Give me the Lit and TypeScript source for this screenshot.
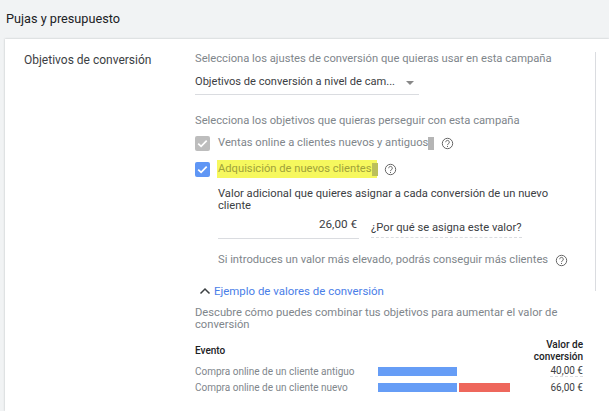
import { LitElement, html, css, svg } from "lit";
import { customElement } from "lit/decorators.js";

const help = svg`<svg class="help" width="13" height="13" viewBox="0 0 13 13" fill="none"><circle cx="6.5" cy="6.5" r="5.2" stroke="#666" stroke-width="1"/><path d="M4.7 5.200a1.800 1.800 0 1 1 2.800 1.500c-.6.4-1 .7-1 1.400" stroke="#666" stroke-width="1"/><rect x="6" y="9" width="1" height="1" fill="#666"/></svg>`;
const check = svg`<svg width="15" height="15" viewBox="0 0 15 15" fill="none"><path d="M3.200 7.600l2.900 2.800 5.600-5.800" stroke="#fff" stroke-width="1.700"/></svg>`;

@customElement("app-root")
export class AppRoot extends LitElement {
  static styles = css`
    :host { display: block; width: 609px; height: 411px; overflow: hidden; background: #f1f3f4; font-family: Roboto, sans-serif; font-size: 11.2px; color: #80868b; }
    .title { height: 39px; box-sizing: border-box; padding: 11px 0 0 6px; font-size: 12.7px; line-height: 16px; color: #202124; }
    .card { margin-left: 5px; height: 372px; box-sizing: border-box; background: #fff; padding: 13px 0 0 19px; display: flex; box-shadow: 0 0 2px rgba(60,64,67,.3); }
    .label { width: 171px; flex: none; font-size: 12px; line-height: 16px; color: #3c4043; }
    .main { flex: 1; min-width: 0; }
    .upper { width: 401px; height: 239px; box-sizing: border-box; border-right: 1px solid #dadce0; }
    .line { line-height: 14px; white-space: nowrap; }
    .select { width: 224px; height: 22px; margin-top: 7px; box-sizing: border-box; border-bottom: 1px solid #dadce0; display: flex; align-items: flex-start; color: #3c4043; padding-top: 2px; line-height: 14px; white-space: nowrap; font-size: 11.1px; }
    .arrow { width: 0; height: 0; margin: 6px 0 0 11px; border-left: 4px solid transparent; border-right: 4px solid transparent; border-top: 4px solid #888; }
    .goals { margin-top: 19px; }
    .chk { display: flex; align-items: center; height: 16px; }
    .box { width: 15px; height: 15px; border-radius: 2px; flex: none; margin-right: 8px; }
    .box.off { background: #bdbdbd; }
    .box.on { background: #5f96f5; }
    .first { margin-top: 7px; }
    .second { margin-top: 10px; }
    .mark { width: 6px; height: 13px; background: #b5b5b5; flex: none; }
    .hl { background: #f6f85e; color: #a0a23a; padding: 2px 0 2px 1px; margin-left: -1px; display: flex; align-items: center; line-height: 14px; }
    .hl .mark { background: #bcc05a; margin-right: -1px; }
    .help { flex: none; margin-left: 7px; }
    .detail { margin: 11px 0 0 23px; }
    .dark { color: #3c4043; line-height: 12px; width: 340px; }
    .val { display: flex; align-items: flex-start; height: 28px; }
    .input { width: 141px; height: 27px; box-sizing: border-box; border-bottom: 1px solid #dadce0; color: #3c4043; text-align: right; line-height: 14px; padding: 5px 2px 0 0; font-size: 11.7px; }
    .why { margin-left: 12px; margin-top: 9px; color: #3c4043; line-height: 14px; height: 17px; box-sizing: border-box; border-bottom: 1px dashed #dadce0; }
    .hint { display: flex; align-items: center; margin-top: 13px; line-height: 14px; }
    .toggle { display: flex; align-items: center; margin: -7px 0 0 4px; color: #4a7ee8; line-height: 14px; font-size: 11.45px; }
    .toggle svg { margin-right: 3px; }
    .desc { margin-top: 9px; line-height: 12px; width: 380px; }
    .table { width: 388px; margin-top: 8px; }
    .head { display: flex; justify-content: space-between; align-items: center; color: #202124; font-weight: 500; font-size: 10px; line-height: 12px; }
    .head .r { text-align: right; }
    .row { display: flex; align-items: center; height: 16px; font-size: 10px; color: #80868b; }
    .name { width: 183px; flex: none; white-space: nowrap; }
    .bars { display: flex; gap: 2px; flex: 1; }
    .bar { height: 9px; }
    .blue { width: 79px; background: #669df6; }
    .red { width: 51px; background: #ee675c; }
    .num { color: #3c4043; text-align: right; }
    .first-num { border-bottom: 1px dashed #dadce0; }
  `;

  render() {
    return html`
      <div class="title">Pujas y presupuesto</div>
      <div class="card">
        <div class="label">Objetivos de conversión</div>
        <div class="main">
          <div class="upper">
            <div class="line">Selecciona los ajustes de conversión que quieras usar en esta campaña</div>
            <div class="select"><span>Objetivos de conversión a nivel de cam...</span><span class="arrow"></span></div>
            <div class="goals line">Selecciona los objetivos que quieras perseguir con esta campaña</div>
            <div class="chk first">
              <span class="box off">${check}</span>
              <span class="line">Ventas online a clientes nuevos y antiguos</span><span class="mark"></span>${help}
            </div>
            <div class="chk second">
              <span class="box on">${check}</span>
              <span class="hl"><span class="line">Adquisición de nuevos clientes</span><span class="mark"></span></span>${help}
            </div>
            <div class="detail">
              <div class="dark">Valor adicional que quieres asignar a cada conversión de un nuevo cliente</div>
              <div class="val">
                <div class="input">26,00 €</div>
                <div class="why">¿Por qué se asigna este valor?</div>
              </div>
              <div class="hint">Si introduces un valor más elevado, podrás conseguir más clientes ${help}</div>
            </div>
          </div>
          <div class="toggle">
            <svg width="12" height="8" viewBox="0 0 12 8" fill="none"><path d="M1.500 6.500L6 2l4.500 4.500" stroke="#3c4043" stroke-width="1.500"/></svg>
            Ejemplo de valores de conversión
          </div>
          <div class="desc">Descubre cómo puedes combinar tus objetivos para aumentar el valor de conversión</div>
          <div class="table">
            <div class="head"><span>Evento</span><span class="r">Valor de<br />conversión</span></div>
            <div>
              <div class="row"><span class="name">Compra online de un cliente antiguo</span><span class="bars"><span class="bar blue"></span></span><span class="num first-num">40,00 €</span></div>
              <div class="row"><span class="name">Compra online de un cliente nuevo</span><span class="bars"><span class="bar blue"></span><span class="bar red"></span></span><span class="num">66,00 €</span></div>
            </div>
          </div>
        </div>
      </div>
    `;
  }
}
